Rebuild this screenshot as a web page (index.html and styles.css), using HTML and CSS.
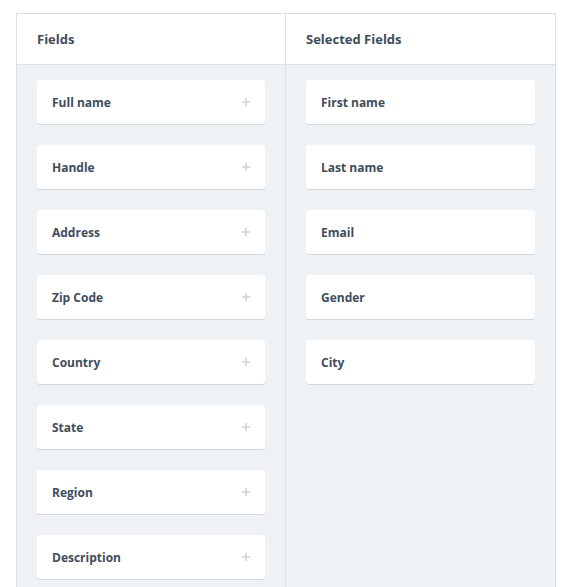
FILE: index.html
```html
<!DOCTYPE html>
<html>
<head>
<meta charset="utf-8">
<link rel="stylesheet" href="styles.css">
</head>
<body>
<div class="board">
  <div class="col">
    <div class="col-head">Fields</div>
    <div class="col-body">
      <div class="card"><span>Full name</span><svg class="plus" viewBox="0 0 8 8"><path d="M4 0V8M0 4H8"/></svg></div>
      <div class="card"><span>Handle</span><svg class="plus" viewBox="0 0 8 8"><path d="M4 0V8M0 4H8"/></svg></div>
      <div class="card"><span>Address</span><svg class="plus" viewBox="0 0 8 8"><path d="M4 0V8M0 4H8"/></svg></div>
      <div class="card"><span>Zip Code</span><svg class="plus" viewBox="0 0 8 8"><path d="M4 0V8M0 4H8"/></svg></div>
      <div class="card"><span>Country</span><svg class="plus" viewBox="0 0 8 8"><path d="M4 0V8M0 4H8"/></svg></div>
      <div class="card"><span>State</span><svg class="plus" viewBox="0 0 8 8"><path d="M4 0V8M0 4H8"/></svg></div>
      <div class="card"><span>Region</span><svg class="plus" viewBox="0 0 8 8"><path d="M4 0V8M0 4H8"/></svg></div>
      <div class="card"><span>Description</span><svg class="plus" viewBox="0 0 8 8"><path d="M4 0V8M0 4H8"/></svg></div>
    </div>
  </div>
  <div class="col">
    <div class="col-head">Selected Fields</div>
    <div class="col-body">
      <div class="card"><span>First name</span></div>
      <div class="card"><span>Last name</span></div>
      <div class="card"><span>Email</span></div>
      <div class="card"><span>Gender</span></div>
      <div class="card"><span>City</span></div>
    </div>
  </div>
</div>
</body>
</html>
```
FILE: styles.css
```css
html, body {
  margin: 0;
  padding: 0;
  background: #ffffff;
}
body {
  padding: 13px 9px 0 16px;
  font-family: "Open Sans", "Liberation Sans", sans-serif;
}
.board {
  display: grid;
  grid-template-columns: 268px 270px;
  border: 1px solid #dde1e4;
  border-bottom: none;
  width: 538px;
}
.col + .col {
  border-left: 1px solid #dde1e4;
}
.col {
  display: flex;
  flex-direction: column;
}
.col-head {
  height: 51px;
  box-sizing: border-box;
  padding: 0 20px;
  display: flex;
  align-items: center;
  font-size: 13px;
  font-weight: 700;
  color: #3e4d5b;
  background: #fff;
  border-bottom: 1px solid #dde1e4;
}
.col-body {
  flex: 1;
  background: #eff2f5;
  padding: 15px 20px 20px;
  display: flex;
  flex-direction: column;
  gap: 21px;
}
.card {
  height: 44px;
  box-sizing: border-box;
  background: #fff;
  border-radius: 3px;
  box-shadow: 0 1px 0 #d3d8dc;
  padding: 0 15px;
  display: flex;
  align-items: center;
  justify-content: space-between;
  font-size: 12px;
  font-weight: 700;
  color: #3e4d5b;
}
.plus {
  width: 8px;
  height: 8px;
  stroke: #cfd3d7;
  stroke-width: 1.6;
  fill: none;
}
```
